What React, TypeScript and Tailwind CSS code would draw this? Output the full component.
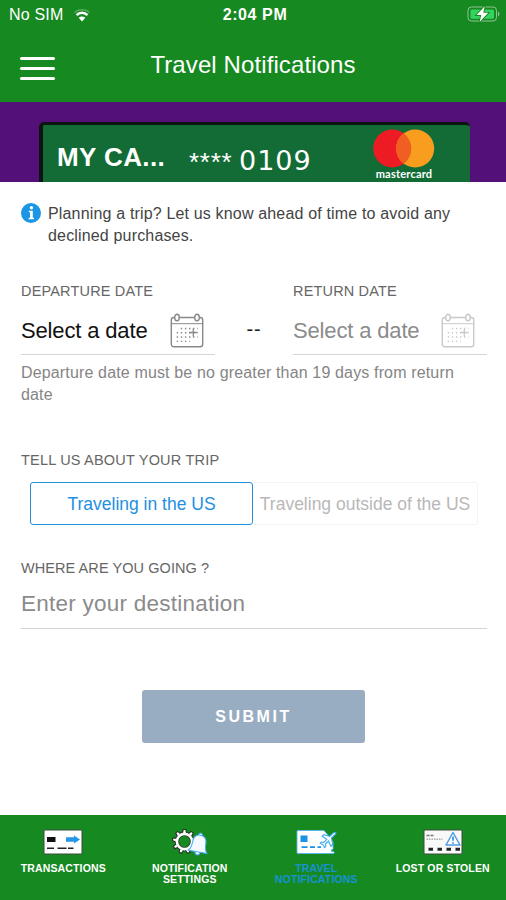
import { useState } from "react";

type IconProps = { className?: string };

function WifiIcon() {
  return (
    <svg viewBox="0 0 18 14" className="h-[14px] w-[18px]" fill="none" stroke="white">
      <path d="M1.5 4.5C5.5.6 12.5.6 16.5 4.5" strokeWidth="1.2" opacity="0.3" />
      <path d="M3.6 7.1C6.6 3.9 11.4 3.9 14.4 7.1" strokeWidth="2.6" />
      <path d="M9 13.4 5.7 9.8C7.5 8.1 10.5 8.1 12.3 9.8Z" fill="white" stroke="none" />
    </svg>
  );
}

function BatteryIcon() {
  return (
    <svg viewBox="0 0 34 18" className="h-[18px] w-[34px]">
      <rect x="1" y="2" width="28.5" height="14" rx="3.5" fill="none" stroke="#8fc494" strokeWidth="1" />
      <path d="M31 6.4c1.8.8 1.8 4.2 0 5z" fill="#8fc494" />
      <rect x="3.5" y="4.4" width="23.5" height="9.4" rx="1.5" fill="#35d35f" />
      <path d="M17.8 1.2 9.5 10h4.8L12.6 17 21.3 7.8h-5z" fill="white" stroke="#168920" strokeWidth="1.8" paintOrder="stroke" />
    </svg>
  );
}

function MastercardLogo() {
  return (
    <svg viewBox="0 0 62 39" className="h-[39px] w-[62px]">
      <circle cx="19.3" cy="19.5" r="19" fill="#ed1c24" />
      <circle cx="42.2" cy="19.5" r="19" fill="#f99d1f" />
      <path d="M30.75 4.3a19 19 0 0 1 0 30.4 19 19 0 0 1 0-30.4z" fill="#f15e22" />
    </svg>
  );
}

function InfoIcon() {
  return (
    <svg viewBox="0 0 20 20" className="h-5 w-5 shrink-0">
      <circle cx="10" cy="10" r="10" fill="#1a96e4" />
      <circle cx="10.4" cy="4.8" r="1.7" fill="white" />
      <path d="M7.8 7.8h4v7h1.2v1.5H7.6v-1.5h1.5V9.3H7.8z" fill="white" />
    </svg>
  );
}

function CalendarIcon({ className }: IconProps) {
  return (
    <svg viewBox="0 0 34 35" className={className} fill="none" stroke="currentColor">
      <rect x="1.3" y="4.5" width="31.4" height="29.3" rx="2.5" strokeWidth="1.4" />
      <path d="M2 10.7h30" strokeWidth="1" />
      <ellipse cx="7" cy="4.5" rx="2.3" ry="3.3" fill="white" strokeWidth="1.4" />
      <ellipse cx="27" cy="4.5" rx="2.3" ry="3.3" fill="white" strokeWidth="1.4" />
      <path d="M10.8 15.5h17M6.7 19.7h21M6.7 24h21M6.7 28.4h13" strokeWidth="1.4" strokeDasharray="1.4 2.7" />
      <path d="M23.3 15.5v8M19.3 19.5h8" strokeWidth="1.3" />
    </svg>
  );
}

function TransactionsIcon() {
  return (
    <svg viewBox="0 0 40 26" className="h-[26px] w-10">
      <rect x="1" y="1" width="38" height="24" rx="1" fill="white" stroke="#3d4a3f" strokeWidth="1" />
      <rect x="4" y="8" width="8.5" height="5" fill="#111" />
      <path d="M23 8.3h8V6.5l6 4-6 4v-1.8h-8z" fill="#2497e8" />
      <path d="M4 19.2h7M14.5 19.2h9M25 19.2h5.5" stroke="#222" strokeWidth="1.4" />
    </svg>
  );
}

const GEAR_ANGLES = [0, 40, 80, 120, 160, 200, 240, 280, 320];

function SettingsBellIcon() {
  return (
    <svg viewBox="0 0 36 28" className="h-7 w-9">
      <g stroke="#25372a" fill="none">
        <circle cx="12.5" cy="12.5" r="7.6" strokeWidth="4.2" />
        {GEAR_ANGLES.map((a) => (
          <path key={a} d="M10.3 4.5 11.2.4h2.6l.9 4.1z" strokeWidth="1.2" fill="white" transform={`rotate(${a} 12.5 12.5)`} />
        ))}
      </g>
      <circle cx="12.5" cy="12.5" r="7.6" stroke="white" strokeWidth="2.6" fill="none" />
      <g transform="rotate(10 27 15)" fill="#f4faff" stroke="#4babf3" strokeWidth="1">
        <circle cx="27" cy="5.8" r="1.8" />
        <circle cx="27" cy="23.6" r="2.4" />
        <path d="M27 6C22.3 6 20.3 9.6 20.3 14 20.3 18.6 19.6 20.6 17.6 23H36.4C34.4 20.6 33.7 18.6 33.7 14 33.7 9.6 31.7 6 27 6Z" />
      </g>
    </svg>
  );
}

function TravelIcon() {
  return (
    <svg viewBox="0 0 41 26" className="h-[26px] w-[41px]">
      <path d="M2 1.5H28L31 5 37 13V20.5H35.5V22.5H38V24.5H2A1 1 0 0 1 1 23.5V2.5A1 1 0 0 1 2 1.5Z" fill="white" stroke="#55b8f2" strokeWidth=".9" />
      <rect x="4.5" y="6.5" width="7" height="6.5" fill="#1b91e5" />
      <path d="M5.5 18.2h6M14 18.2h5M21.5 18.2h3.5" stroke="#1b91e5" strokeWidth="1.7" />
      <path
        d="M40 3.8c-1.4-.8-3 .2-4.2 1.6l-2 2-6-1.8-1.7 1.7 4.7 3-3 3.1-2.4-.4-1.2 1.3 3 1.5 1.3 2.9 1.3-1.2-.3-2.5 3-3 2.4 5.2 1.8-1.7-1.2-6.5 2-2c1.5-1.2 2.5-2.3 2.5-3.2z"
        fill="white"
        stroke="#3da9ed"
        strokeWidth="1.1"
      />
    </svg>
  );
}

function LostIcon() {
  return (
    <svg viewBox="0 0 40 26" className="h-[26px] w-10">
      <rect x="1" y="1" width="38" height="24" rx="1" fill="#f8f9f8" stroke="#3d4a3f" strokeWidth="1" />
      <path d="M3.5 6.5h7" stroke="#777" strokeWidth="1.6" strokeDasharray="3 1" />
      <path d="M3.5 10.3h16" stroke="#aaa" strokeWidth="1.6" strokeDasharray="1.5 1" />
      <path d="M5.5 20.3h32" stroke="#252525" strokeWidth="3" strokeDasharray="4.5 4.5" />
      <path d="M30 3.5 37 16H23z" fill="white" stroke="#4f9ce4" strokeWidth="1.5" strokeLinejoin="round" />
      <path d="M30 7.5v4.2M30 13.2v1.5" stroke="#2888dd" strokeWidth="1.6" />
    </svg>
  );
}

type DateFieldProps = { label: string; disabled?: boolean };

function DateField({ label, disabled }: DateFieldProps) {
  return (
    <div className="w-[194px]">
      <div className="text-[14.5px] leading-5 tracking-[0.17px] text-[#666]">{label}</div>
      <button
        type="button"
        disabled={disabled}
        className="flex h-[54px] w-full items-center justify-between border-b border-[#d5d5d5] pr-[11.5px] pt-[5px]"
      >
        <span className={`text-[22px] tracking-[-0.15px] ${disabled ? "text-[#8b8b8b]" : "text-[#111]"}`}>
          Select a date
        </span>
        <CalendarIcon className={`h-[35px] w-[34px] ${disabled ? "text-[#c9c9c9]" : "text-[#888]"}`} />
      </button>
    </div>
  );
}

const TABS = [
  { id: "transactions", lines: ["TRANSACTIONS"], Icon: TransactionsIcon },
  { id: "settings", lines: ["NOTIFICATION", "SETTINGS"], Icon: SettingsBellIcon },
  { id: "travel", lines: ["TRAVEL", "NOTIFICATIONS"], Icon: TravelIcon },
  { id: "lost", lines: ["LOST OR STOLEN"], Icon: LostIcon },
];

export default function App() {
  const [destination, setDestination] = useState("");
  const [abroad, setAbroad] = useState(false);
  const [tab, setTab] = useState("travel");

  return (
    <div className="flex h-[900px] w-[506px] flex-col overflow-hidden bg-white font-['Liberation_Sans',Arial,sans-serif]">
      <header className="h-[102px] shrink-0 bg-[#168920] text-white">
        <div className="grid h-7 grid-cols-3 items-center pl-[9px] pr-[5px]">
          <div className="flex items-center gap-[9px] pt-[2px]">
            <span className="text-base tracking-[0.2px]">No SIM</span>
            <WifiIcon />
          </div>
          <span className="pt-[2px] text-center text-base font-bold tracking-[0.6px]">2:04 PM</span>
          <div className="flex justify-end">
            <BatteryIcon />
          </div>
        </div>
        <div className="grid h-[74px] grid-cols-[55px_1fr_55px] items-center px-5">
          <button type="button" aria-label="Menu" className="mt-[6px] flex w-[35px] flex-col gap-[7px]">
            <span className="h-[3px] rounded-full bg-white" />
            <span className="h-[3px] rounded-full bg-white" />
            <span className="h-[3px] rounded-full bg-white" />
          </button>
          <h1 className="text-center text-2xl tracking-[0.1px]">Travel Notifications</h1>
        </div>
      </header>

      <section className="h-20 shrink-0 overflow-hidden bg-[#531079] pl-[39px] pr-9 pt-5">
        <div className="flex h-[60px] items-start rounded-t-[5px] border-l-4 border-t-[3px] border-[#0b1410] bg-[#136c36] pl-[14px] text-white">
          <span className="mt-[16px] w-[132px] text-[26px] leading-8 font-bold tracking-[0.4px]">MY CA...</span>
          <span className="mt-[21px] w-[50px] text-[26px] leading-8 tracking-[0.7px]">****</span>
          <span className="mt-[20px] w-[134px] font-['DejaVu_Sans',sans-serif] text-[27px] leading-8 tracking-[1px]">0109</span>
          <div className="mt-[4px] flex w-[62px] flex-col items-center">
            <MastercardLogo />
            <span className="font-['Lato',sans-serif] text-[11px] leading-[11px] font-bold tracking-[0.2px]">mastercard</span>
          </div>
        </div>
      </section>

      <main className="h-[633px] shrink-0 pl-[21px] pr-[19px] pt-[21px]">
        <div className="flex gap-[7px]">
          <InfoIcon />
          <p className="text-base leading-[22px] tracking-[0.165px] text-[#444]">
            Planning a trip? Let us know ahead of time to avoid any
            <br />
            declined purchases.
          </p>
        </div>

        <div className="mt-[34px] flex justify-between">
          <DateField label="DEPARTURE DATE" />
          <span className="mt-[32px] text-[20px] leading-8 tracking-[0.8px] text-[#222]">--</span>
          <DateField label="RETURN DATE" disabled />
        </div>
        <p className="mt-[7px] text-base leading-[22px] tracking-[0.15px] text-[#858585]">
          Departure date must be no greater than 19 days from return
          <br />
          date
        </p>

        <div className="mt-[44px] text-[14.5px] leading-5 tracking-[0.2px] text-[#666]">TELL US ABOUT YOUR TRIP</div>
        <div className="mt-3 flex h-[43px] pl-[9px]">
          <button
            type="button"
            onClick={() => setAbroad(false)}
            className={`w-[223px] rounded-[3px] border pt-px text-[17.5px] ${
              abroad ? "border-[#f0f0f0] text-[#b8b8b8]" : "border-[#238fdf] text-[#238fdf]"
            }`}
          >
            Traveling in the US
          </button>
          <button
            type="button"
            onClick={() => setAbroad(true)}
            className={`w-[225px] whitespace-nowrap rounded-[3px] border pt-px text-[17.5px] ${
              abroad ? "border-[#238fdf] text-[#238fdf]" : "border-l-0 border-[#f3f3f3] text-[#b8b8b8]"
            }`}
          >
            Traveling outside of the US
          </button>
        </div>

        <label className="mt-[33px] block">
          <span className="block text-[14.5px] leading-5 tracking-[0.07px] text-[#666]">WHERE ARE YOU GOING ?</span>
          <input
            value={destination}
            onChange={(e) => setDestination(e.target.value)}
            placeholder="Enter your destination"
            className="h-[51px] w-full border-b border-[#d5d5d5] pt-[2px] text-[22.5px] tracking-[0.25px] outline-none placeholder:text-[#8b8b8b]"
          />
        </label>

        <button
          type="submit"
          className="ml-[121px] mt-[61px] block h-[53px] w-[223px] rounded-[3px] bg-[#99adc2] text-base font-bold tracking-[2.5px] text-white"
        >
          SUBMIT
        </button>
      </main>

      <nav className="grid flex-1 grid-cols-4 bg-[#168920]">
        {TABS.map(({ id, lines, Icon }) => (
          <button
            key={id}
            type="button"
            onClick={() => setTab(id)}
            className={`flex flex-col items-center pt-[14px] text-[10.5px] leading-[11px] font-bold tracking-[0.15px] ${
              tab === id ? "text-[#1692d5]" : "text-white"
            }`}
          >
            <span className="flex h-[34px] items-start">
              <Icon />
            </span>
            {lines.map((line) => (
              <span key={line} className="whitespace-nowrap">{line}</span>
            ))}
          </button>
        ))}
      </nav>
    </div>
  );
}
